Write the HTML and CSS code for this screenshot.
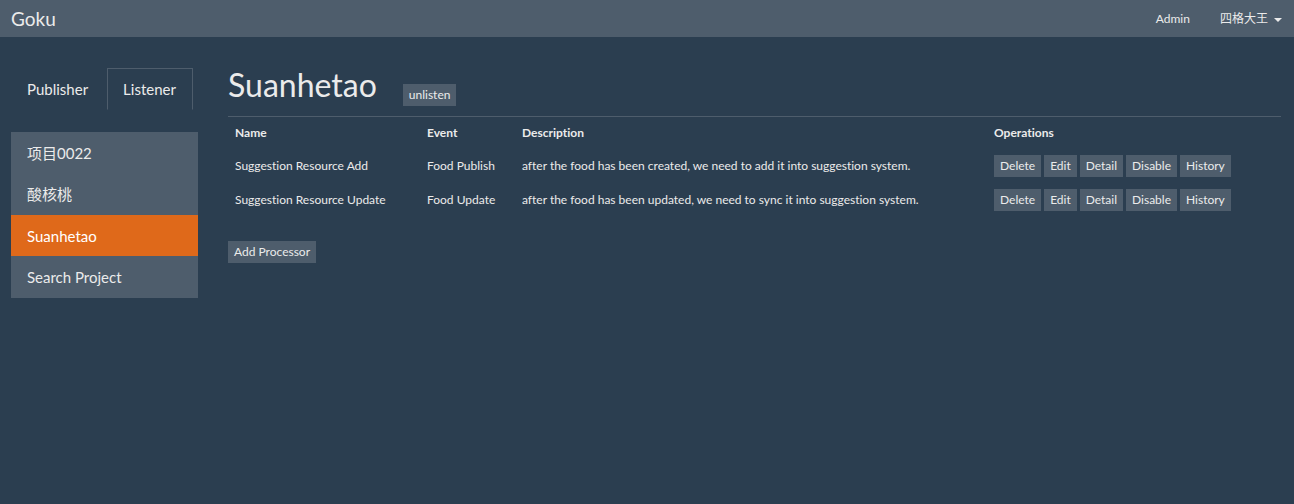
FILE: index.html
```html
<!DOCTYPE html>
<html lang="en">
<head>
<meta charset="utf-8">
<title>Goku</title>
<link rel="stylesheet" href="styles.css">
</head>
<body>
<header class="navbar">
  <a class="brand">Goku</a>
  <nav class="nav-right">
    <a class="nav-link">Admin</a>
    <a class="nav-link user">四格大王 <span class="caret"></span></a>
  </nav>
</header>
<div class="page">
  <aside class="side">
    <ul class="tabs">
      <li class="tab">Publisher</li>
      <li class="tab active">Listener</li>
    </ul>
    <ul class="list">
      <li class="item">项目0022</li>
      <li class="item">酸核桃</li>
      <li class="item active">Suanhetao</li>
      <li class="item">Search Project</li>
    </ul>
  </aside>
  <main class="main">
    <div class="title-row">
      <h1 class="title">Suanhetao</h1>
      <button class="btn btn-title">unlisten</button>
    </div>
    <table class="table">
      <colgroup>
        <col class="c-name"><col class="c-event"><col class="c-desc"><col>
      </colgroup>
      <thead>
        <tr><th>Name</th><th>Event</th><th>Description</th><th>Operations</th></tr>
      </thead>
      <tbody>
        <tr>
          <td>Suggestion Resource Add</td>
          <td>Food Publish</td>
          <td>after the food has been created, we need to add it into suggestion system.</td>
          <td><div class="ops"><button class="btn">Delete</button><button class="btn">Edit</button><button class="btn">Detail</button><button class="btn">Disable</button><button class="btn">History</button></div></td>
        </tr>
        <tr>
          <td>Suggestion Resource Update</td>
          <td>Food Update</td>
          <td>after the food has been updated, we need to sync it into suggestion system.</td>
          <td><div class="ops"><button class="btn">Delete</button><button class="btn">Edit</button><button class="btn">Detail</button><button class="btn">Disable</button><button class="btn">History</button></div></td>
        </tr>
      </tbody>
    </table>
    <button class="btn btn-add">Add Processor</button>
  </main>
</div>
</body>
</html>
```

FILE: styles.css
```css
* { box-sizing: border-box; }
html, body {
  margin: 0;
  background: #2B3E50;
  color: #EBEBEB;
  font-family: Lato, "Noto Sans CJK SC", sans-serif;
  font-size: 15px;
  line-height: 1.42857;
  font-variant-ligatures: none;
}
ul { margin: 0; padding: 0; list-style: none; }

.navbar {
  height: 37px;
  background: #4E5D6C;
  display: flex;
  align-items: center;
  justify-content: space-between;
  padding: 0 12px 0 11px;
}
.brand { font-size: 19px; line-height: 37px; color: #EBEBEB; }
.nav-right { display: flex; align-items: center; gap: 29px; }
.nav-link { font-size: 12px; color: #EBEBEB; line-height: 37px; }
.nav-link:first-child { margin-right: 1px; }
.caret {
  display: inline-block;
  width: 0; height: 0;
  margin-left: 3px;
  vertical-align: middle;
  border-top: 4px solid #EBEBEB;
  border-left: 4px solid transparent;
  border-right: 4px solid transparent;
}

.page {
  display: flex;
  gap: 30px;
  padding: 0 13px 0 11px;
}
.side { width: 187px; flex: none; padding-top: 31px; }
.tabs { display: flex; gap: 2px; }
.tab {
  padding: 10px 16px 10px 15px;
  border: 1px solid transparent;
  line-height: 20px;
}
.tab.active { border-color: #4E5D6C; border-bottom-color: transparent; }
.list { margin-top: 22px; }
.item {
  background: #4E5D6C;
  padding: 11px 16px 9px;
  height: 41.4px;
  line-height: 21.4px;
}
.item.active { background: #DF691A; color: #fff; }

.main { flex: 1; padding-top: 28px; }
.title-row {
  display: flex;
  align-items: flex-start;
  padding-bottom: 10px;
  border-bottom: 1px solid #4E5D6C;
}
.title {
  margin: 0;
  font-size: 32px;
  font-weight: 400;
  line-height: 40px;
}
.btn {
  font-family: Lato, "Noto Sans CJK SC", sans-serif;
  font-size: 12px;
  line-height: 18px;
  padding: 1px 5px;
  border: 1px solid transparent;
  background: #4E5D6C;
  color: #EBEBEB;
  border-radius: 0;
  font-variant-ligatures: none;
}
.btn-title { margin: 19px 0 0 26px; }

.table { width: 100%; border-collapse: collapse; table-layout: fixed; font-size: 12px; }
.c-name { width: 192px; }
.c-event { width: 95px; }
.c-desc { width: 472px; }
.table th {
  text-align: left;
  font-weight: 700;
  padding: 7px 7px;
  line-height: 18px;
}
.table td {
  padding: 6px 7px;
  line-height: 22px;
  white-space: nowrap;
}
.ops { display: flex; gap: 3px; }
.btn-add { margin-top: 24px; }
```
